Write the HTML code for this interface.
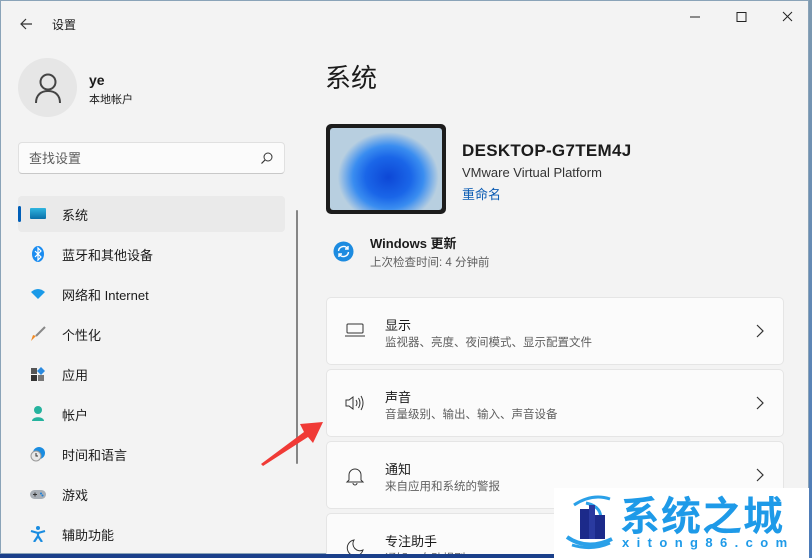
<!DOCTYPE html><html style="overflow:hidden;width:812px;height:558px"><head><meta charset="utf-8"><style>
*{margin:0;padding:0;box-sizing:border-box}
body{width:812px;height:558px;overflow:hidden;background:#1a3f8a;font-family:"Liberation Sans","Noto Sans CJK SC",sans-serif;position:relative;color:#1b1b1b}
.win{position:absolute;left:0;top:0;width:809px;height:554px;background:#f3f3f3;overflow:hidden;box-shadow:inset 0 0 0 1px #8aa3b8}
.rstrip{position:absolute;left:809px;top:0;width:3px;height:558px;background:linear-gradient(#7d99b0,#4a7ab8)}
.a{position:absolute;white-space:nowrap}
.nav{position:absolute;left:18px;width:267px;height:36px;font-size:13px}
.nav .t{position:absolute;left:44px;top:9px}
.nav .i{position:absolute;left:12px;top:10px;width:16px;height:16px}
.card{position:absolute;left:326px;width:458px;height:68px;background:#fbfbfb;border:1px solid #e5e5e5;border-radius:5px}
.card .t{position:absolute;left:58px;top:17px;font-size:13px}
.card .s{position:absolute;left:58px;top:36px;font-size:11.5px;color:#5f5f5f}
.card .c{position:absolute;right:18px;top:26px}
.card .ic{position:absolute;left:18px;top:24px}
</style></head><body>
<div class="rstrip"></div>
<div class="win">
<svg class="a" style="left:18px;top:17px" width="16" height="14"><path d="M14 7H3M8 2L3 7l5 5" stroke="#333" stroke-width="1.2" fill="none"/></svg>
<div class="a" style="left:52px;top:16px;font-size:12px">设置</div>
<svg class="a" style="left:688px;top:10px" width="110" height="16"><path d="M2 7h10" stroke="#222"/><rect x="49" y="2.5" width="9" height="9" fill="none" stroke="#222"/><path d="M95 2l9 9M104 2l-9 9" stroke="#222"/></svg>
<div class="a" style="left:18px;top:58px;width:59px;height:59px;border-radius:50%;background:#e6e6e6"></div>
<svg class="a" style="left:33px;top:72px" width="30" height="32"><circle cx="15" cy="10" r="7.5" fill="none" stroke="#444" stroke-width="2"/><path d="M3 31c0-8 5-12 12-12s12 4 12 12" fill="none" stroke="#444" stroke-width="2"/></svg>
<div class="a" style="left:89px;top:72px;font-size:14px;font-weight:bold">ye</div>
<div class="a" style="left:89px;top:91px;font-size:11px">本地帐户</div>
<div class="a" style="left:18px;top:142px;width:267px;height:32px;background:#fbfbfb;border:1px solid #e0e0e0;border-bottom-color:#c8c8c8;border-radius:4px"></div>
<div class="a" style="left:29px;top:148px;font-size:13px;color:#5d5d5d">查找设置</div>
<svg class="a" style="left:260px;top:151px" width="14" height="14"><circle cx="8" cy="6" r="4" fill="none" stroke="#333"/><path d="M5 9l-3.5 3.5" stroke="#333" stroke-width="1.2"/></svg>
<div class="nav" style="top:196px;background:#eaeaea;border-radius:4px"><div class="a" style="left:0;top:10px;width:3px;height:16px;background:#005fb8;border-radius:2px"></div><div class="i" style="top:12px;width:16px;height:11px;background:linear-gradient(#2fb5e0,#0a6fa8);border-radius:1px"></div><div class="t">系统</div></div>
<div class="nav" style="top:236px"><svg class="i" viewBox="0 0 16 16"><ellipse cx="8" cy="8" rx="6" ry="8" fill="#1a8cf0"/><path d="M5 5l6 6-3 3V2l3 3-6 6" stroke="#fff" fill="none" stroke-width="1.2"/></svg><div class="t">蓝牙和其他设备</div></div>
<div class="nav" style="top:276px"><svg class="i" viewBox="0 0 16 16"><path d="M1 6q7-6 14 0l-7 7z" fill="#1a9ae8"/></svg><div class="t">网络和 Internet</div></div>
<div class="nav" style="top:316px"><svg class="i" viewBox="0 0 16 16"><path d="M15 1L6 10" stroke="#888" stroke-width="2"/><path d="M6 10l-5 5 2-6z" fill="#f08a24"/></svg><div class="t">个性化</div></div>
<div class="nav" style="top:356px"><svg class="i" viewBox="0 0 16 16"><rect x="1" y="2" width="6" height="6" fill="#555"/><rect x="1" y="9" width="6" height="6" fill="#333"/><rect x="8" y="9" width="6" height="6" fill="#777"/><path d="M11 1l4 4-4 4-4-4z" fill="#2a8ae0"/></svg><div class="t">应用</div></div>
<div class="nav" style="top:396px"><svg class="i" viewBox="0 0 16 16"><circle cx="8" cy="4" r="4" fill="#25b39e"/><path d="M2 15c0-5 12-5 12 0z" fill="#25b39e"/></svg><div class="t">帐户</div></div>
<div class="nav" style="top:436px"><svg class="i" viewBox="0 0 16 16"><circle cx="9" cy="7" r="6" fill="#1a8ce0"/><circle cx="6" cy="10" r="5" fill="#e8e8e8" stroke="#999"/><path d="M6 7v3h2" stroke="#333" fill="none"/></svg><div class="t">时间和语言</div></div>
<div class="nav" style="top:476px"><svg class="i" viewBox="0 0 16 16"><rect x="0" y="4" width="16" height="9" rx="4.5" fill="#a8aeb5"/><path d="M3 8.5h4M5 6.5v4" stroke="#333"/><circle cx="11" cy="7.5" r="1" fill="#1a7fd8"/><circle cx="12.5" cy="9.5" r="1" fill="#1a7fd8"/></svg><div class="t">游戏</div></div>
<div class="nav" style="top:516px"><svg class="i" viewBox="0 0 16 16"><circle cx="8" cy="2" r="2" fill="#1a8ce0"/><path d="M1 5l7 2 7-2M8 7v3l-4 6M8 10l4 6" stroke="#1a8ce0" stroke-width="2.2" fill="none"/></svg><div class="t">辅助功能</div></div>
<div class="a" style="left:296px;top:210px;width:2px;height:254px;background:#858585;border-radius:1px"></div>
<div class="a" style="left:325px;top:58px;font-size:26px">系统</div>
<div class="a" style="left:326px;top:124px;width:120px;height:90px;background:#1c1c1c;border-radius:5px"></div>
<div class="a" style="left:330px;top:128px;width:112px;height:82px;border-radius:3px;background:radial-gradient(ellipse 45% 55% at 52% 60%,#0d47d6 0,#1a66e8 45%,#3a8df0 70%,#b8cfe0 100%),#b8cfe0"></div>
<div class="a" style="left:462px;top:141px;font-size:17px;font-weight:bold;letter-spacing:.3px">DESKTOP-G7TEM4J</div>
<div class="a" style="left:462px;top:165px;font-size:13px;color:#333">VMware Virtual Platform</div>
<div class="a" style="left:462px;top:184px;font-size:13px;color:#0a5bb3">重命名</div>
<svg class="a" style="left:333px;top:241px" width="21" height="21"><circle cx="10.5" cy="10.5" r="10" fill="#1c8be0"/><path d="M5.5 10a5 5 0 0 1 9-2.5M15.5 11a5 5 0 0 1-9 2.5" stroke="#fff" stroke-width="1.4" fill="none"/><path d="M15 5v3h-3M6 16v-3h3" stroke="#fff" stroke-width="1.4" fill="none"/></svg>
<div class="a" style="left:370px;top:233px;font-size:13px;font-weight:bold">Windows 更新</div>
<div class="a" style="left:370px;top:254px;font-size:11.5px;color:#5f5f5f">上次检查时间: 4 分钟前</div>
<div class="card" style="top:297px"><svg class="ic" width="20" height="16"><rect x="2" y="2" width="16" height="9" rx="1" fill="none" stroke="#333"/><path d="M0 14h20" stroke="#333"/></svg><div class="t">显示</div><div class="s">监视器、亮度、夜间模式、显示配置文件</div><svg class="c" width="10" height="14"><path d="M2 1l6 6-6 6" stroke="#333" fill="none" stroke-width="1.2"/></svg></div>
<div class="card" style="top:369px"><svg class="ic" width="20" height="18"><path d="M1 6h3l4-3v12l-4-3H1z" fill="none" stroke="#333"/><path d="M11 6q2 3 0 6M13.5 4q3 5 0 10M16 2q4 7 0 14" fill="none" stroke="#333"/></svg><div class="t">声音</div><div class="s">音量级别、输出、输入、声音设备</div><svg class="c" width="10" height="14"><path d="M2 1l6 6-6 6" stroke="#333" fill="none" stroke-width="1.2"/></svg></div>
<div class="card" style="top:441px"><svg class="ic" width="20" height="20"><path d="M4 14V9a6 6 0 0 1 12 0v5l2 2H2z" fill="none" stroke="#333"/><path d="M8 17a2 2 0 0 0 4 0" fill="none" stroke="#333"/></svg><div class="t">通知</div><div class="s">来自应用和系统的警报</div><svg class="c" width="10" height="14"><path d="M2 1l6 6-6 6" stroke="#333" fill="none" stroke-width="1.2"/></svg></div>
<div class="card" style="top:513px"><svg class="ic" width="20" height="20"><path d="M9 2a8 8 0 1 0 9 10A7 7 0 0 1 9 2z" fill="none" stroke="#333"/></svg><div class="t">专注助手</div><div class="s">通知、自动规则</div></div>
<svg class="a" style="left:258px;top:418px" width="70" height="50"><path d="M3 46L46 14l-4-8 23-2-10 21-5-6L5 48z" fill="#f03a36"/></svg>
</div>
<div class="a" style="left:554px;top:488px;width:255px;height:70px;background:#fff"></div>
<svg class="a" style="left:564px;top:493px" width="50" height="58"><path d="M10 12q18-12 36-6M22 10q18 4 14 20" stroke="#2aa0e8" stroke-width="3" fill="none"/><rect x="16" y="16" width="10" height="30" fill="#1c2a8a"/><rect x="25" y="12" width="6" height="34" fill="#2a3aa0"/><rect x="31" y="22" width="10" height="24" fill="#1c2a8a"/><path d="M3 44q20 14 45 2" stroke="#2aa0e8" stroke-width="4" fill="none"/><path d="M8 52q20 6 38-2" stroke="#2aa0e8" stroke-width="3" fill="none"/></svg>
<div class="a" style="left:620px;top:489px;font-size:40px;font-weight:bold;color:#1e9ae8;letter-spacing:1px;font-family:'Noto Sans CJK SC',sans-serif;line-height:48px">系统之城</div>
<div class="a" style="left:622px;top:535px;font-size:13px;font-weight:bold;color:#1e9ae8;letter-spacing:7.4px">xitong86.com</div>
</body></html>
